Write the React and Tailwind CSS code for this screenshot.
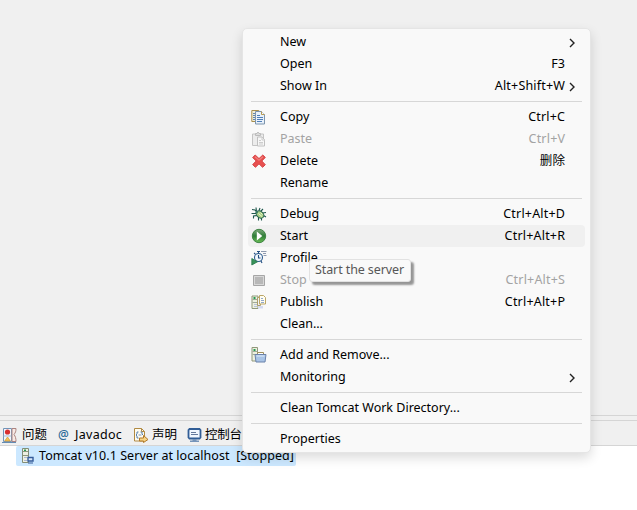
import React from "react";

const CopyIcon = () => (
  <svg width="16" height="16" viewBox="0 0 16 16">
    <path d="M.8 1.500h7v11h-7z" fill="#f4efd9" stroke="#a88f4e" />
    <path d="M2 4.500h3M2 6.500h3M2 8.500h3M2 10.500h3" stroke="#5f86b3" />
    <path d="M4.500 2.500h6l3 3v9.500h-9z" fill="#e8f1fb" stroke="#7d95ad" />
    <path d="M10.500 2.500v3h3" fill="#fff" stroke="#b79a55" />
    <path d="M6 6.500h3M6 8.500h6M6 10.500h6M6 12.500h5" stroke="#507fb8" />
  </svg>
);
const PasteIcon = () => (
  <svg width="16" height="16" viewBox="0 0 16 16">
    <path d="M1.500 3h11v11.500h-11z" fill="#ececec" stroke="#c4c4c4" />
    <path d="M4.500 4.500v-2h1.500l1-1.500 1 1.500h1.500v2z" fill="#ddd" stroke="#bbb" />
    <path d="M6.500 6h4.500l2.500 2.500v6.500h-7z" fill="#f7f7f7" stroke="#c0c0c0" />
    <path d="M11 6v3h3M8 9.500h2M8 11.500h4M8 13h4" fill="none" stroke="#cdcdcd" />
  </svg>
);
const DeleteIcon = () => (
  <svg width="16" height="16" viewBox="0 0 16 16">
    <path d="M4.200 2 8 5.600 11.800 2l2.500 2.400L10.800 8l3.500 3.700-2.700 2.600L8 10.800l-3.600 3.500-2.700-2.700L5.200 8 1.700 4.500z" fill="#e8504f" stroke="#d64144" strokeLinejoin="round" />
    <path d="m4 3.700 4 3.600 3.900-3.600" fill="none" stroke="#ef807c" strokeWidth="1.200" />
  </svg>
);
const DebugIcon = () => (
  <svg width="16" height="16" viewBox="0 0 16 16">
    <path d="M5.500 5.500 5 1.500M1 3.500l3 .5 2 2.500M.5 7.500H5M2.500 12.500v-2.500L6 9.500M8 4.500l1-2.500M10 5l2-2M11.500 7l3.500-.5M12.500 9.500l2.500 1.500M7.500 11v3.500M10.500 12v2.500" fill="none" stroke="#1f584d" strokeWidth="1.100" />
    <ellipse cx="9" cy="8.500" rx="4.200" ry="3.200" transform="rotate(40 9 8.500)" fill="#a8cf85" stroke="#23604e" />
    <path d="m7.500 7.500 3.500 3M9.500 6.500l2 2" stroke="#eff7ce" />
    <circle cx="5.700" cy="6.200" r="1.200" fill="#3c7c67" />
  </svg>
);
const StartIcon = () => (
  <svg width="16" height="16" viewBox="0 0 16 16">
    <defs>
      <linearGradient id="run" x2="0" y2="1">
        <stop stopColor="#7fa97d" />
        <stop offset=".5" stopColor="#2f7d38" />
        <stop offset="1" stopColor="#6abf55" />
      </linearGradient>
    </defs>
    <circle cx="8" cy="8" r="6.700" fill="url(#run)" stroke="#3f8444" />
    <path d="M5.800 3.500v9L11.300 8z" fill="#fff" />
  </svg>
);
const ProfileIcon = () => (
  <svg width="16" height="16" viewBox="0 0 16 16">
    <circle cx="7.500" cy="7.500" r="4" fill="#f3f8fc" stroke="#315f91" strokeWidth="1.100" />
    <path d="M7.500 3.500V1.500M6 1.500h3M4.300 4 3 3M7.500 5v3h2M10 11l1 2" fill="none" stroke="#244e80" strokeWidth="1.100" />
    <path d="M10 1.500h5.500M12 3.500h3M12.500 5.500h3" stroke="#8e9aaf" />
    <path d="M.800 8.500v6.500l5.700-3.200z" fill="#389359" stroke="#26764b" strokeWidth=".800" />
  </svg>
);
const StopIcon = () => (
  <svg width="16" height="16" viewBox="0 0 16 16">
    <path d="M2.500 3.500h11v10h-11z" fill="#d8d8d8" stroke="#a6a6a6" />
    <path d="M4 5h8v7H4z" fill="#b8b8b8" />
  </svg>
);
const PublishIcon = () => (
  <svg width="16" height="16" viewBox="0 0 16 16">
    <path d="M1 2h6v12.500H1z" fill="#edf0e0" stroke="#91987a" />
    <path d="M1.500 5.500h5M1.500 8.500h5" stroke="#a1a997" />
    <path d="M2.500 3h2v2h-2z" fill="#279b52" />
    <path d="M3 10.500h3M3 12.500h3" stroke="#b8c3d9" />
    <path d="M6.500 3.500h3v8h-3z" fill="#eef2fa" stroke="#ae9e6a" />
    <path d="M8.500 1.500h4l2 2v6.500h-6z" fill="#fffdf1" stroke="#bca767" />
    <path d="M10 4.500h2M10 6.500h3M10 8.500h3" stroke="#92a9cc" />
    <path d="M7 12h5v2.500H7z" fill="#d4daf1" />
  </svg>
);
const AddRemoveIcon = () => (
  <svg width="16" height="16" viewBox="0 0 16 16">
    <path d="M1 .500h5.500v13.500H1z" fill="#edf0e0" stroke="#91987a" />
    <path d="M1.500 4.500h5M1.500 7.500h4" stroke="#a1a997" />
    <path d="M2.500 2h2v2h-2z" fill="#279b52" />
    <path d="M6.500 8V5.500h6V8" fill="#fff" stroke="#a0905d" />
    <path d="M4 7.500h11l-1 7.500H5z" fill="#a9c4e6" stroke="#6b82aa" />
    <path d="M5.500 9h8" stroke="#dfebf8" />
  </svg>
);
const ProblemsIcon = () => (
  <svg width="16" height="16" viewBox="0 0 16 16">
    <path d="M1.500 1.500h8v13h-8z" fill="#f2f6fc" stroke="#7295b8" />
    <path d="M1.500 9h8" stroke="#a9bfd6" />
    <path d="M10 1.500h4c0 3-.5 4-2 6 1.500 2 2 4 2 7h-4z" fill="#f7e9e5" stroke="#ad8480" />
    <circle cx="5.500" cy="5" r="2.600" fill="#d8302f" />
    <path d="M2.700 14 5.500 10l2.800 4z" fill="#f3c55b" stroke="#d49a32" strokeWidth=".700" />
    <path d="M0 15.500h14" stroke="#648cb4" />
  </svg>
);
const DeclarationIcon = () => (
  <svg width="16" height="16" viewBox="0 0 16 16">
    <path d="M1.500 1.500h7l3 3v9.500h-10z" fill="#fffcf1" stroke="#b18a42" />
    <path d="M8.500 1.500v3h3" fill="none" stroke="#b18a42" />
    <path d="M5.500 5H4v2L3 8l1 1v2h1.500M7.500 5H9v2l1 1" fill="none" stroke="#547eaf" />
    <path d="M5.500 8h3" stroke="#7897bb" />
    <path d="M6.500 11h4V8.500l4.500 4-4.500 3V14h-4z" fill="#f7d484" stroke="#b17a2b" />
  </svg>
);
const ConsoleIcon = () => (
  <svg width="16" height="16" viewBox="0 0 16 16">
    <path d="M2.500 2h10l1 1v7.500l-1 1h-10l-1-1V3z" fill="#f1f7ff" stroke="#315d96" strokeWidth="1.800" />
    <path d="M4 5.500h5M4 7.500h7" stroke="#64799c" />
    <path d="M5.500 12h4v1.500h2.500V15H3v-1.500h2.500z" fill="#7594b9" />
  </svg>
);
const ServerIcon = () => (
  <svg width="16" height="16" viewBox="0 0 16 16">
    <path d="M2.500 .5h6v14h-6z" fill="#edf0e2" stroke="#838d76" />
    <path d="M3 3.500h5M3 7.500h5" stroke="#8c957e" />
    <path d="M4 1.500h2V3H4z" fill="#279b52" />
    <path d="M4 9.500h3M4 12.500h3" stroke="#adb8d2" />
    <path d="M8 9.500h5v3.500H8z" fill="#d8e8fa" stroke="#355c9b" strokeWidth="1.400" />
    <path d="M8 15h5" stroke="#355c9b" />
  </svg>
);

const groups = [
  [
    { label: "New", sub: true },
    { label: "Open", keys: "F3" },
    { label: "Show In", keys: "Alt+Shift+W", sub: true },
  ],
  [
    { label: "Copy", keys: "Ctrl+C", icon: CopyIcon },
    { label: "Paste", keys: "Ctrl+V", icon: PasteIcon, disabled: true },
    { label: "Delete", keys: "删除", icon: DeleteIcon },
    { label: "Rename" },
  ],
  [
    { label: "Debug", keys: "Ctrl+Alt+D", icon: DebugIcon },
    { label: "Start", keys: "Ctrl+Alt+R", icon: StartIcon, active: true },
    { label: "Profile", icon: ProfileIcon },
    { label: "Stop", keys: "Ctrl+Alt+S", icon: StopIcon, disabled: true },
    { label: "Publish", keys: "Ctrl+Alt+P", icon: PublishIcon },
    { label: "Clean..." },
  ],
  [
    { label: "Add and Remove...", icon: AddRemoveIcon },
    { label: "Monitoring", sub: true },
  ],
  [{ label: "Clean Tomcat Work Directory..." }],
  [{ label: "Properties" }],
];

function MenuItem({ label, keys, icon: Icon, sub, disabled, active }) {
  return (
    <div className={`mx-[5px] flex h-[22px] items-center rounded-[4px] pr-[6px] pl-[3px] ${active ? "bg-[#f0f0f0]" : ""} ${disabled ? "text-[#a3a3a3]" : "text-black"}`}>
      <span className="mr-[13px] h-4 w-4 shrink-0">{Icon && <Icon />}</span>
      <span className="flex-1 whitespace-pre">{label}</span>
      <span className="-mr-[0.2px] tracking-[0.2px]">{keys}</span>
      <span className="flex w-[14px] justify-center">
        {sub && (
          <svg width="6" height="10" viewBox="0 0 6 10" className="mt-px">
            <path d="m1 1 4 4-4 4" fill="none" stroke="#222" strokeWidth="1.400" />
          </svg>
        )}
      </span>
    </div>
  );
}

export default function App() {
  return (
    <div className="relative h-[510px] w-[637px] overflow-hidden bg-white font-['Noto_Sans','Noto_Sans_CJK_SC',sans-serif] text-[12.5px] leading-[22px]">
      <div className="h-[415px] bg-[#f0f0f0]" />
      <div className="h-[6px] border-y border-[#d5d5d5] bg-[#f0f0f0]" />
      <div className="flex h-[25px] items-center border-b border-[#d5d5d5] bg-[#f0f0f0] pt-[3px] pl-[2px]">
        <div className="flex w-[55px] items-center gap-[4px]"><ProblemsIcon /><span>问题</span></div>
        <div className="flex w-[76px] items-center"><span className="w-[18px] pl-[1px] text-[12px] font-medium text-[#2d6c99]">@</span><span className="tracking-[0.3px]">Javadoc</span></div>
        <div className="flex w-[54px] items-center gap-[3px]"><DeclarationIcon /><span>声明</span></div>
        <div className="flex items-center gap-[2px]"><ConsoleIcon /><span className="tracking-[-0.2px]">控制台</span></div>
      </div>
      <div className="ml-[16px] flex h-[20px] w-[280px] items-center rounded-[2px] bg-[#cce8ff] pl-[4px]">
        <ServerIcon />
        <span className="ml-[3px] whitespace-pre tracking-[0.05px]">Tomcat v10.1 Server at localhost  [Stopped]</span>
      </div>

      <div className="absolute top-[28px] left-[242px] h-[425px] w-[349px] rounded-[5px] border border-[#e5e5e5] bg-[#f9f9f9] pt-[2px] shadow-[0_5px_12px_rgba(0,0,0,0.14)]">
        {groups.map((items, g) => (
          <div key={g}>
            {g > 0 && <div className="mx-[8px] flex h-[9px] items-center"><div className="h-px w-full bg-[#d7d7d7]" /></div>}
            {items.map((item) => <MenuItem key={item.label} {...item} />)}
          </div>
        ))}
      </div>

      <div className="absolute top-[259px] left-[309px] flex h-[23px] w-[102px] items-center rounded-[3px] border border-[#e2e2e2] bg-[#f9f9f9] pb-[2px] pl-[5px] text-[#575757] shadow-[3px_3px_2px_rgba(0,0,0,0.4)]">
        <span className="whitespace-pre tracking-[-0.1px]">Start the server</span>
      </div>
    </div>
  );
}
